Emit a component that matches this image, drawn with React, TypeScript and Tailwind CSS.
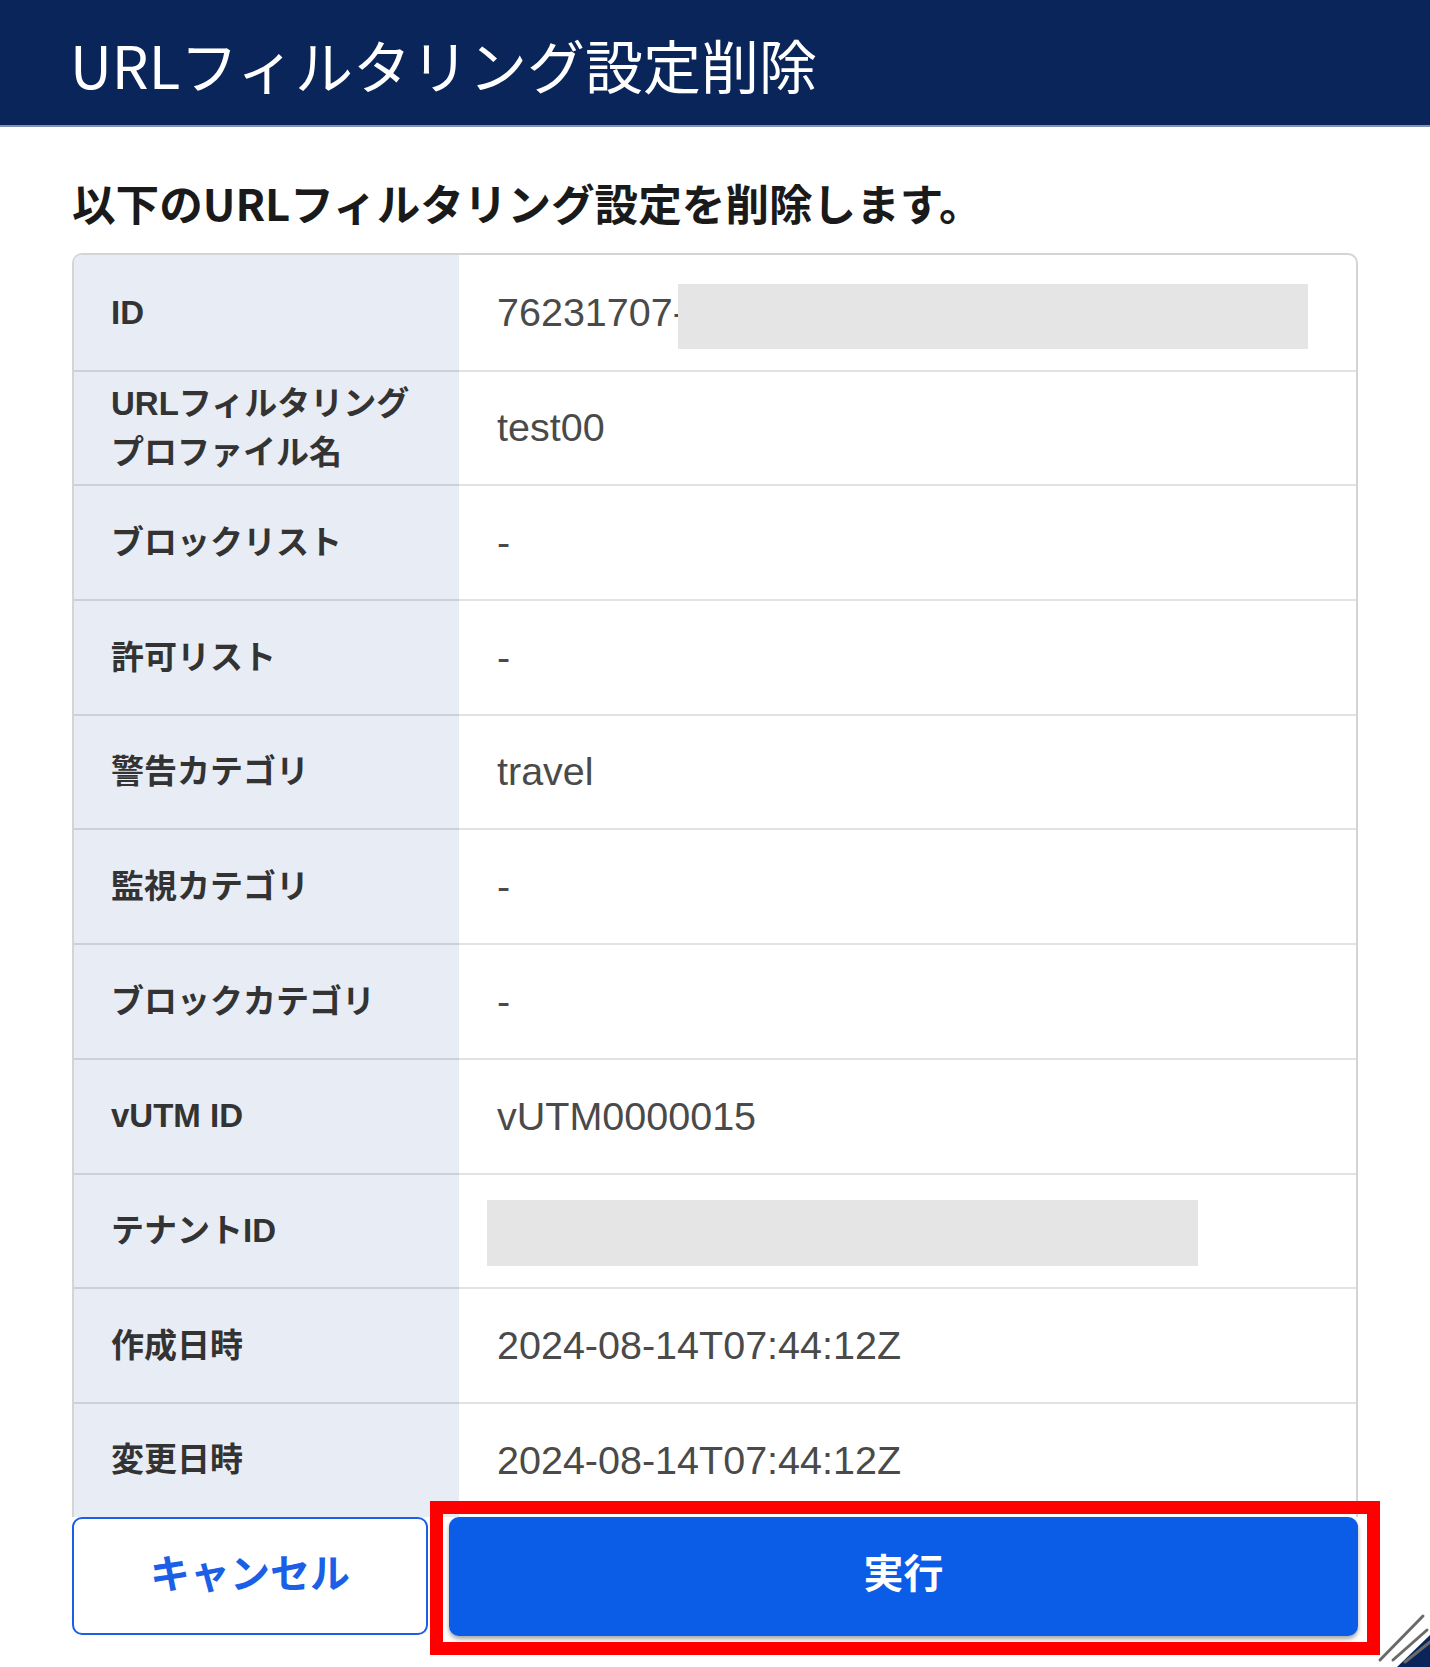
import React from "react";

type Row = { label: React.ReactNode; value: React.ReactNode };

const jp = { fontFamily: '"Noto Sans CJK JP", "Noto Sans", sans-serif' };
const lat = { fontFamily: '"Liberation Sans", "Noto Sans CJK JP", sans-serif' };

export default function App() {
  const rows: Row[] = [
    {
      label: "ID",
      value: (
        <div className="flex items-center">
          <span>76231707-</span>
          <div className="relative ml-[-8px] mt-[8px] h-[65px] w-[630px] bg-[#e5e5e5]" />
        </div>
      ),
    },
    {
      label: (
        <span className="block leading-[49px]">
          URLフィルタリング
          <br />
          プロファイル名
        </span>
      ),
      value: "test00",
    },
    { label: "ブロックリスト", value: "-" },
    { label: "許可リスト", value: "-" },
    { label: "警告カテゴリ", value: "travel" },
    { label: "監視カテゴリ", value: "-" },
    { label: "ブロックカテゴリ", value: "-" },
    { label: "vUTM ID", value: "vUTM0000015" },
    {
      label: "テナントID",
      value: <div className="ml-[-10px] mt-[5px] h-[66px] w-[711px] bg-[#e5e5e5]" />,
    },
    { label: "作成日時", value: "2024-08-14T07:44:12Z" },
    { label: "変更日時", value: "2024-08-14T07:44:12Z" },
  ];

  return (
    <div className="relative min-h-[1667px] w-[1430px] overflow-hidden bg-white">
      <header className="flex h-[127px] items-center border-b-2 border-[#8392b4] bg-[#0a2559] pl-[70px] pt-[2px]">
        <h1 className="text-[58px] font-normal leading-none text-white" style={jp}>
          URLフィルタリング設定削除
        </h1>
      </header>

      <div className="px-[72px]">
        <p className="pt-[44px] pb-[20px] text-[43.6px] font-bold leading-[62px] text-[#1a1a1a]" style={jp}>
          以下のURLフィルタリング設定を削除します。
        </p>

        <div className="w-[1286px] overflow-hidden rounded-t-[10px] border-x-2 border-t-2 border-[#d4d4d4]">
          {rows.map((r, i) => (
            <div key={i} className={`flex h-[114.7px] ${i > 0 ? "border-t-2 border-[#e2e2e2]" : ""}`}>
              <div
                className={`flex w-[385px] shrink-0 items-center bg-[#e8ecf5] pl-[37px] text-[33px] font-bold text-[#333333] ${
                  i > 0 ? "-mt-[2px] border-t-2 border-[#cbd0da]" : ""
                }`}
                style={lat}
              >
                {r.label}
              </div>
              <div className="flex flex-1 items-center pl-[38px] text-[39.5px] text-[#4a4a4a]" style={lat}>
                {r.value}
              </div>
            </div>
          ))}
        </div>

        <div className="flex gap-[21px]">
          <button
            className="flex h-[118px] w-[356px] items-center justify-center rounded-[10px] border-2 border-[#1a5fe6] bg-white pb-[10px] text-[40px] font-bold text-[#1a5fe6]"
            style={jp}
          >
            キャンセル
          </button>
          <button
            className="flex h-[119px] w-[909px] items-center justify-center rounded-[10px] bg-[#0b5ce6] pb-[10px] text-[40px] font-bold text-white shadow-[0_3px_4px_rgba(0,0,0,0.35)]"
            style={jp}
          >
            実行
          </button>
        </div>
      </div>

      <div className="pointer-events-none absolute left-[430px] top-[1501px] h-[154px] w-[950px] border-[13px] border-[#ff0000]" />

      <svg className="absolute left-[1375px] top-[1610px]" width="55" height="57" viewBox="0 0 55 57">
        <polygon points="22,57 55,25 55,57" fill="#0a2559" />
        <line x1="5" y1="50" x2="48" y2="6" stroke="#6a6a6a" strokeWidth="3" strokeLinecap="round" />
        <line x1="18" y1="50" x2="52" y2="20" stroke="#6a6a6a" strokeWidth="3" strokeLinecap="round" />
        <line x1="30" y1="52" x2="55" y2="32" stroke="#6a6a6a" strokeWidth="3" strokeLinecap="round" />
      </svg>
    </div>
  );
}
